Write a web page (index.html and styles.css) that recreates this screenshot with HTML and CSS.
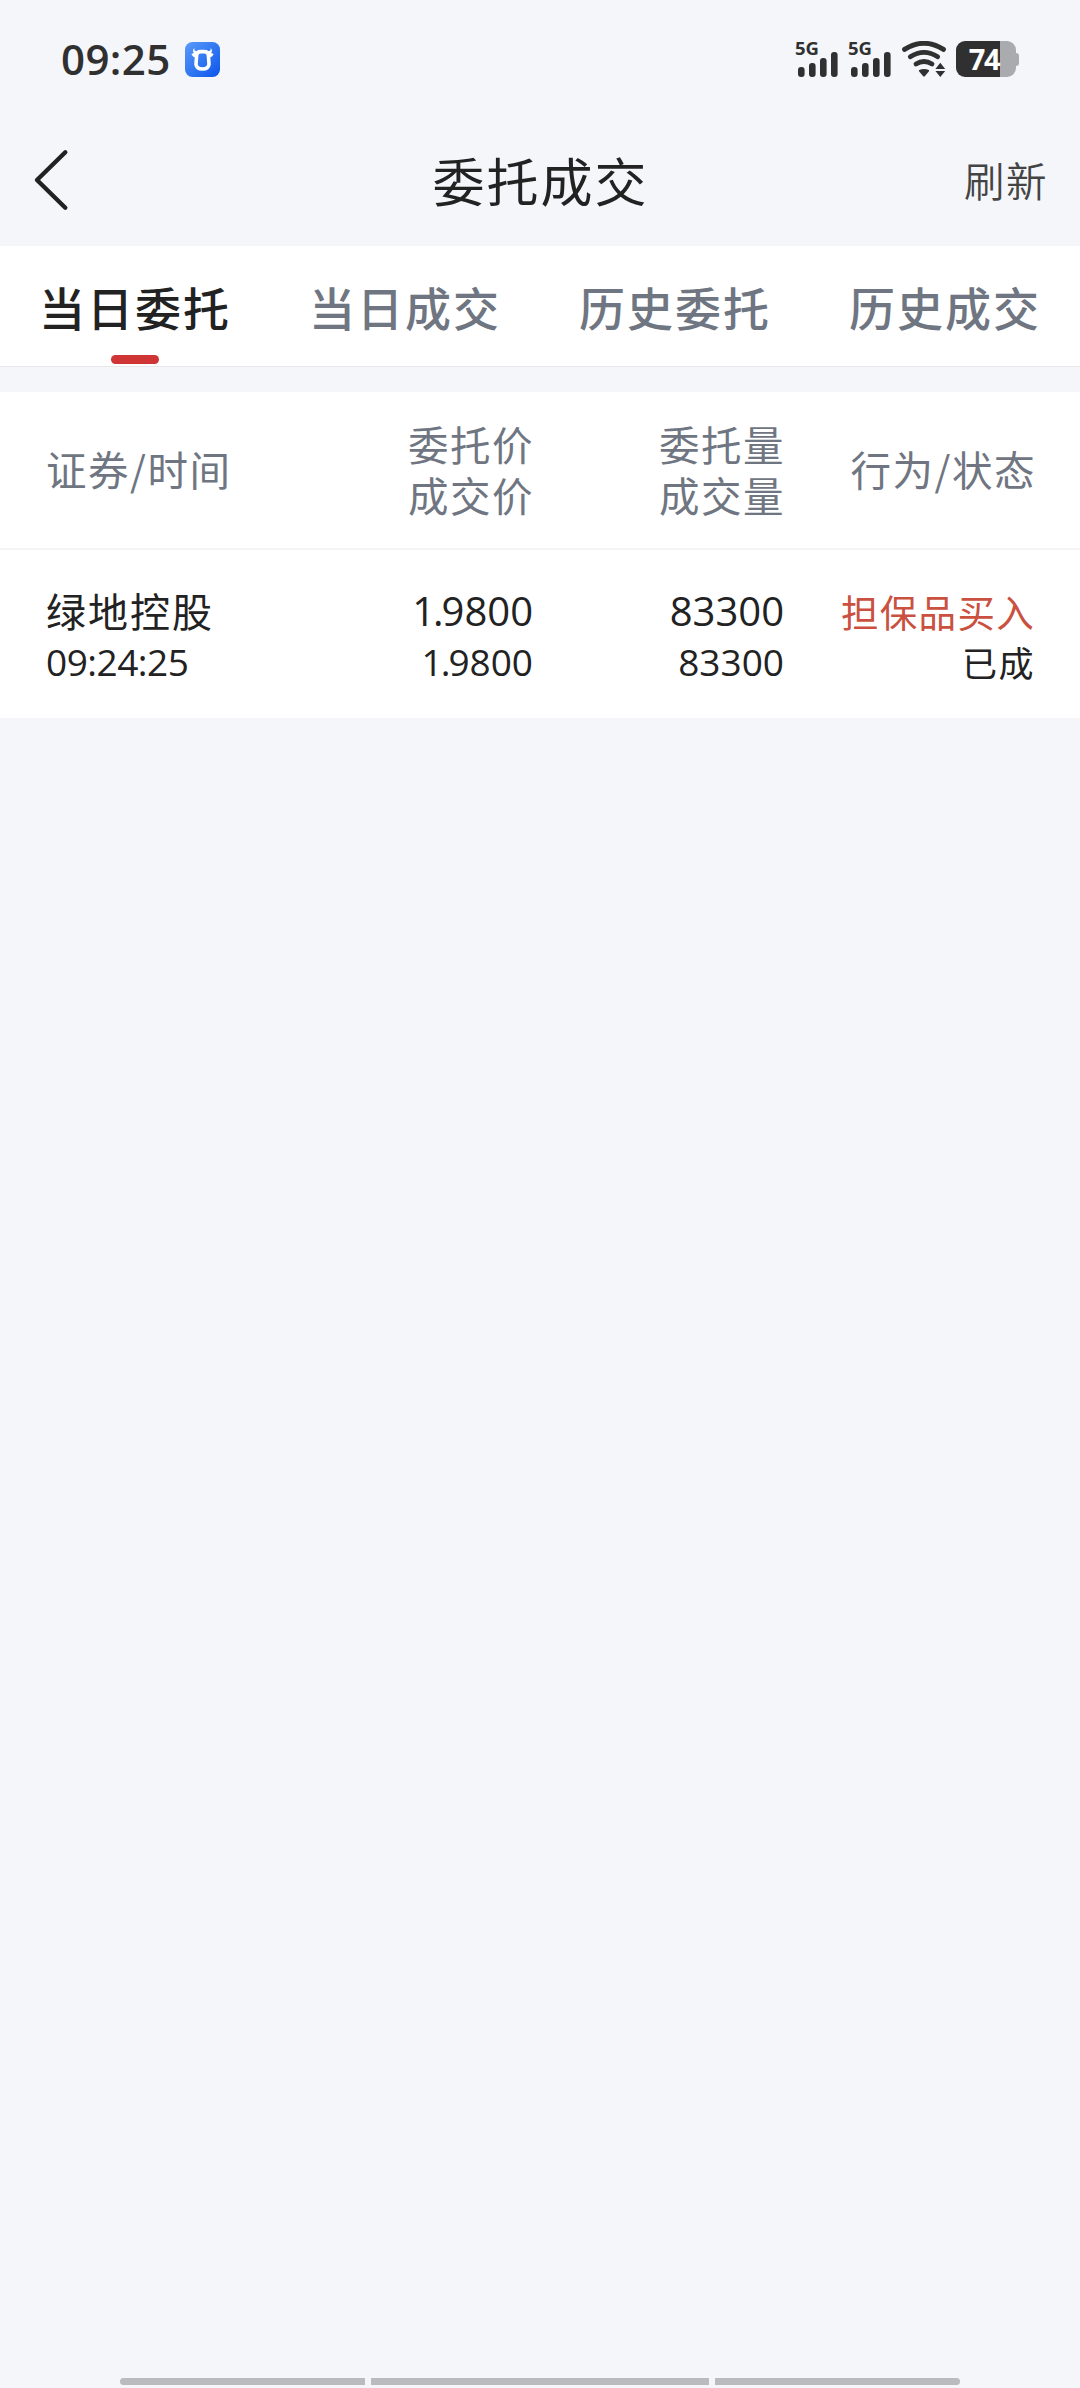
FILE: index.html
```html
<!DOCTYPE html>
<html lang="zh-CN">
<head>
<meta charset="utf-8">
<title>委托成交</title>
<link rel="stylesheet" href="styles.css">
</head>
<body>
<div class="screen">
  <div class="status">
    <span class="clock">09:25</span>
    <svg class="app" width="35" height="35" viewBox="0 0 35 35">
      <defs><linearGradient id="blue" x1="0" y1="0" x2="1" y2="1"><stop offset="0" stop-color="#5a9bfa"/><stop offset="1" stop-color="#0b55ea"/></linearGradient></defs>
      <rect width="35" height="35" rx="7.5" fill="url(#blue)"/>
      <path d="M9.3 6C8.8 8.4 10.4 9.6 13 9.2L12 14L9.5 15.2C8 14.6 7 13.6 6.4 12L8.8 10.9C7.6 9.4 7.8 7.4 9.3 6ZM25.7 6C26.2 8.4 24.6 9.6 22 9.2L23 14L25.5 15.2C27 14.6 28 13.6 28.6 12L26.2 10.9C27.4 9.4 27.2 7.4 25.7 6Z" fill="#fff"/>
      <path d="M15.6 9.6H19.4Q23.2 9.6 23.4 13.5L24 22.2Q23.4 27 17.5 27T11 22.2L11.6 13.5Q11.8 9.6 15.6 9.6Z" fill="none" stroke="#fff" stroke-width="3.6"/>
    </svg>
    <div class="system">
      <div class="signal"><span class="net">5G</span>
        <svg width="42" height="36" viewBox="0 0 42 36" fill="#303030"><rect x="2" y="26" width="6.6" height="10" rx="3"/><rect x="13" y="22" width="6.6" height="14" rx="3"/><rect x="24" y="17" width="6.6" height="19" rx="3"/><rect x="35" y="11" width="6.6" height="25" rx="3"/></svg>
      </div>
      <div class="signal"><span class="net">5G</span>
        <svg width="42" height="36" viewBox="0 0 42 36" fill="#303030"><rect x="2" y="26" width="6.6" height="10" rx="3"/><rect x="13" y="22" width="6.6" height="14" rx="3"/><rect x="24" y="17" width="6.6" height="19" rx="3"/><rect x="35" y="11" width="6.6" height="25" rx="3"/></svg>
      </div>
      <svg class="wifi" width="44" height="36" viewBox="0 0 44 36">
        <g fill="none" stroke="#303030" stroke-width="4.8" stroke-linecap="round"><path d="M2.5 8.4Q22-4 41.5 8.4"/><path d="M8.3 15.8Q22 7 35.7 15.8"/><path d="M14 23Q22 18 30 23"/></g>
        <path d="M17.2 29Q22 26.8 26.8 29Q27.5 29.6 26.8 30.4L22.8 35.2Q22 36 21.2 35.2L17.2 30.4Q16.5 29.6 17.2 29Z" fill="#303030"/>
        <path d="M38.3 21.8L43.2 28H33.4ZM33.4 30H43.2L38.3 36Z" fill="#303030"/>
      </svg>
      <div class="battery"><span class="level">74</span><i class="tip"></i></div>
    </div>
  </div>

  <header class="nav">
    <svg class="back" width="38" height="64" viewBox="0 0 38 64"><path d="M32.3 4.3L4 32L32.3 59.7" fill="none" stroke="#222" stroke-width="4.4" stroke-linecap="round" stroke-linejoin="round"/></svg>
    <h1 class="title">委托成交</h1>
    <span class="refresh">刷新</span>
  </header>

  <nav class="tabs">
    <span class="tab active">当日委托</span>
    <span class="tab">当日成交</span>
    <span class="tab">历史委托</span>
    <span class="tab">历史成交</span>
  </nav>

  <section class="table">
    <div class="row head">
      <div>证券/时间</div>
      <div class="num">委托价<br>成交价</div>
      <div class="num">委托量<br>成交量</div>
      <div class="num">行为/状态</div>
    </div>
    <div class="row order">
      <div><p class="name">绿地控股</p><p class="time">09:24:25</p></div>
      <div class="num"><p class="big"><span class="unit">1.</span>9800</p><p class="small"><span class="unit">1.</span>9800</p></div>
      <div class="num"><p class="big">83300</p><p class="small">83300</p></div>
      <div class="num"><p class="action">担保品买入</p><p class="state">已成</p></div>
    </div>
  </section>

  <div class="gesture"><i class="side left"></i><i class="middle"></i><i class="side right"></i></div>
</div>
</body>
</html>
```
FILE: styles.css
```css
* { box-sizing: border-box; }
body { margin: 0; background: #f4f6fa; color: #222; font-family: "Noto Sans CJK SC", sans-serif; }
h1, p { margin: 0; font-weight: 400; }
svg { display: block; flex: none; }
.screen { width: 1080px; height: 2388px; display: flex; flex-direction: column; overflow: hidden; }

.status { height: 118px; padding: 0 60px 0 61px; display: flex; align-items: center; flex: none; }
.clock { width: 124px; font: 600 42px/60px "Open Sans", sans-serif; letter-spacing: 0.4px; color: #303030; }
.system { margin-left: auto; display: flex; align-items: center; }
.signal { position: relative; width: 53px; }
.net { position: absolute; left: -1px; top: -2px; font: 700 18.5px/18px "Open Sans", sans-serif; color: #303030; }
.wifi { margin-right: 10px; }
.battery { display: flex; align-items: center; width: 64px; }
.level { width: 60px; height: 36px; border-radius: 9px; background: linear-gradient(90deg, #303030 44px, #aaabaf 44px); color: #fff; font: 700 29px/36px "Open Sans", sans-serif; letter-spacing: -1.5px; text-align: right; padding-right: 17px; }
.tip { width: 3px; height: 13px; background: #aaabaf; border-radius: 0 3px 3px 0; }

.nav { height: 128px; padding: 0 32px 0 33px; display: grid; grid-template-columns: 1fr auto 1fr; align-items: center; flex: none; }
.back { margin-top: -4px; }
.title { margin-top: -4px; font-size: 52px; line-height: 76px; letter-spacing: 2px; }
.refresh { margin-top: -6px; justify-self: end; font-size: 40.5px; letter-spacing: 1.5px; color: #444; font-weight: 350; }

.tabs { height: 121px; background: #fff; border-bottom: 1px solid #e7e8ec; display: grid; grid-template-columns: repeat(4, 1fr); flex: none; }
.tab { display: flex; flex-direction: column; align-items: center; justify-content: space-between; padding: 29px 0 2px; font-size: 46px; line-height: 62px; letter-spacing: 2px; font-weight: 500; color: #6f7682; }
.active { color: #222; }
.active::after { content: ""; width: 48px; height: 9px; border-radius: 5px; background: #d03535; }

.table { margin-top: 25px; background: #fff; flex: none; }
.row { display: grid; grid-template-columns: 237px 251px 251px 251px; padding-left: 46px; }
.num { text-align: right; white-space: nowrap; }
.head { height: 158px; padding-bottom: 3px; border-bottom: 2px solid #f4f4f6; align-items: center; font-size: 40.5px; line-height: 51px; letter-spacing: 1.5px; color: #6f7682; }
.order { height: 168px; padding-top: 35px; }
.order p { height: 51px; line-height: 51px; }
.name { font-size: 40px; letter-spacing: 2px; }
.big { font-family: "Open Sans", sans-serif; font-size: 40px; }
.small, .time { font-family: "Open Sans", sans-serif; font-size: 37px; }
.time { letter-spacing: -0.5px; }
.big, .small { padding-right: 1px; }
.unit { letter-spacing: -2px; }
.action { font-size: 37.5px; letter-spacing: 1.3px; color: #ca5140; }
.state { font-size: 35px; letter-spacing: 1.5px; }
.action, .state { padding-right: 1px; }

.gesture { margin: auto 120px 3px; height: 7px; display: flex; gap: 6px; }
.gesture i { background: #babbbe; }
.side { width: 245px; }
.middle { flex: 1; }
.left { border-radius: 4px 0 0 4px; }
.right { border-radius: 0 4px 4px 0; }
```
